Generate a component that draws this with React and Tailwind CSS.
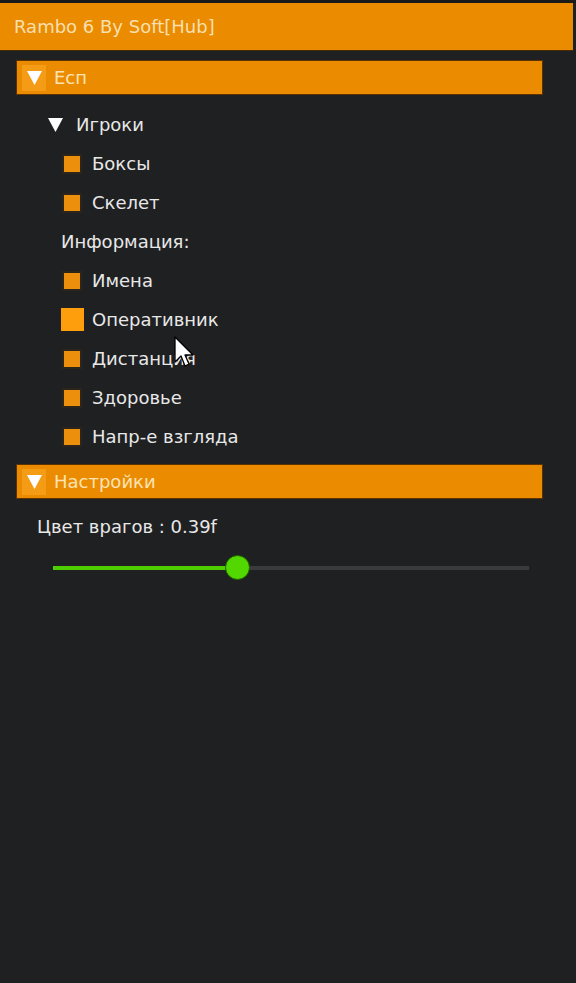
import React from "react";

const font = { fontFamily: '"DejaVu Sans", "Liberation Sans", sans-serif' };

function Tri({ className }) {
  return (
    <svg className={className} viewBox="0 0 14 13">
      <polygon points="0,0 14,0 7,13" fill="#ffffff" />
    </svg>
  );
}

function Section({ title }) {
  return (
    <div className="mx-[16px] w-[527px] h-[35px] bg-[#eb8c00] border border-[#5c3300] flex items-center">
      <div className="ml-[5px] w-[24px] h-[26px] bg-[#f59c16] flex items-center justify-center">
        <Tri className="w-[15px] h-[14px]" />
      </div>
      <span className="ml-[8px] text-[18px] text-[#fbe3b5] leading-none">{title}</span>
    </div>
  );
}

function Check({ label, hover }) {
  return (
    <div className="h-[39px] flex items-center pl-[62px]">
      {hover ? (
        <div className="w-[23px] h-[23px] -ml-[1px] -mr-[2px] bg-[#ff9e0c]" />
      ) : (
        <div className="w-[20px] h-[20px] bg-[#2d241b] flex items-center justify-center">
          <div className="w-[16px] h-[16px] bg-[#ec8f0c]" />
        </div>
      )}
      <span className="ml-[10px] text-[18px] text-[#e8e8e8] leading-none">{label}</span>
    </div>
  );
}

export default function App() {
  return (
    <div
      className="relative w-[576px] h-[983px] bg-[#1f2022] overflow-hidden border-t-[3px] border-t-[#1a1a1a]"
      style={font}
    >
      <div className="w-[573px] h-[48px] bg-[#eb8c00] border-b border-[#4a2a00] flex items-center pl-[14px]">
        <span className="text-[18px] text-[#f8dfae] leading-none">Rambo 6 By Soft[Hub]</span>
      </div>
      <div className="h-[9px]" />
      <Section title="Есп" />
      <div className="pt-[10px]">
        <div className="h-[39px] flex items-center pl-[48px]">
          <Tri className="w-[15px] h-[14px]" />
          <span className="ml-[13px] text-[18px] text-[#e8e8e8] leading-none">Игроки</span>
        </div>
        <Check label="Боксы" />
        <Check label="Скелет" />
        <div className="h-[39px] flex items-center pl-[61px]">
          <span className="text-[18px] text-[#e8e8e8] leading-none">Информация:</span>
        </div>
        <Check label="Имена" />
        <Check label="Оперативник" hover />
        <Check label="Дистанция" />
        <Check label="Здоровье" />
        <Check label="Напр-е взгляда" />
      </div>
      <div className="h-[8px]" />
      <Section title="Настройки" />
      <div className="h-[36px] mt-[10px] flex items-center pl-[37px]">
        <span className="text-[18px] text-[#e8e8e8] leading-none">Цвет врагов : 0.39f</span>
      </div>
      <div className="relative ml-[53px] w-[476px] h-[46px] flex items-center">
        <div className="w-full h-[4px] bg-[#3a3b3e] flex">
          <div className="h-full bg-[#4ed000]" style={{ width: "185px" }} />
        </div>
        <div
          className="absolute w-[25px] h-[25px] rounded-full bg-[#52d800] border border-[#1f5a00]"
          style={{ left: "172px", top: "10px" }}
        />
      </div>
      <svg
        className="absolute"
        style={{ left: "174px", top: "333px" }}
        width="20"
        height="32"
        viewBox="0 0 20 32"
      >
        <polygon
          points="1,1 1,26 7,20 11,30 15,28 11,19 19,19"
          fill="#ffffff"
          stroke="#000000"
          strokeWidth="1.3"
          strokeLinejoin="round"
        />
      </svg>
    </div>
  );
}
